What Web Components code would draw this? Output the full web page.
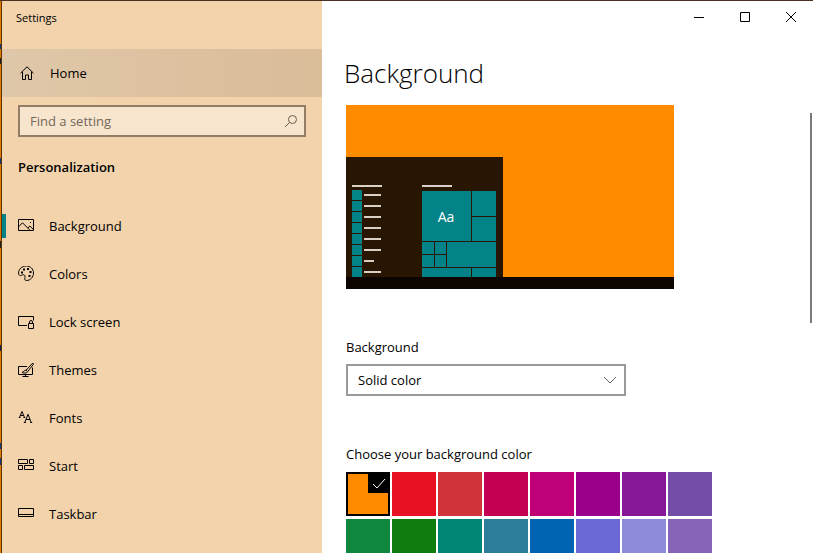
<!DOCTYPE html>
<html lang="en">
<head>
<meta charset="utf-8">
<meta name="viewport" content="width=device-width, initial-scale=1">
<title>Settings</title>
<style>
  body {
    margin: 0;
    font: 13px/20px "Open Sans", "Noto Sans", sans-serif;
    color: #000;
    background: #fff;
  }
</style>
</head>
<body>
<settings-window>
  <settings-sidebar slot="sidebar" heading="Personalization">
    <nav-item icon="background" active>Background</nav-item>
    <nav-item icon="colors">Colors</nav-item>
    <nav-item icon="lock">Lock screen</nav-item>
    <nav-item icon="themes">Themes</nav-item>
    <nav-item icon="fonts">Fonts</nav-item>
    <nav-item icon="start">Start</nav-item>
    <nav-item icon="taskbar">Taskbar</nav-item>
  </settings-sidebar>
  <window-controls></window-controls>
  <background-page></background-page>
</settings-window>

<script>
const ICONS = {
  home: `<path d="M1.500 8.200 8 1.800l6.500 6.400M3.500 6.800v7.700h3v-4.500h3v4.500h3V6.800"/>`,
  search: `<circle cx="9.500" cy="6.500" r="4"/><path d="M6.600 9.400 2 14"/>`,
  background: `<path d="M.5 1.500h15v11H.5zM.5 8.800l4-4 7.700 7.700M9.800 10l2-2 3.700 3.600"/><path d="M12 4h1v1h-1z" fill="currentColor" stroke="none"/>`,
  colors: `<path transform="translate(0 -1)" d="M8.300 1C12.500 1 15.500 4 15.500 8s-3 7.500-7 7.500c-1.400 0-1.900-.8-1.700-1.800.3-1.500.5-2.800-.4-3.600-.8-.7-1.700-.4-2.800.2C2.200 11 .5 10.300.5 8.200.5 4.200 4 1 8.300 1z"/><path d="M3 5.500h2v2H3zM5 2.500h2v2H5zM9 2h2v2H9zM11.500 5h2v2h-2zM10.500 9h2v2h-2z" fill="currentColor" stroke="none"/>`,
  lock: `<path d="M9 11.500H.5v-9h15v4M10.500 9.500h5v5h-5zM11.500 9.500V8a1.500 1.500 0 0 1 3 0v1.500"/>`,
  themes: `<path d="M9 4.500H.5v8h14v-7M7.500 12.500v2M4.500 14.500h6M14.800 1 8 8.200l1.600 1.500L15.500 2.200zM8 8.200c-2-.3-1.800 1.800-4 2.200 2 1.200 5 .8 5.600-.7"/>`,
  fonts: `<path d="M1.500 7.500 4 1.500l2.500 6M2.300 5.500h3.400M.8 7.500h1.700M5.500 7.500h1.700M6.800 12.500 10 4.300l3.200 8.200M8 9.500h4M5.800 12.500h2M12.200 12.500h2"/>`,
  start: `<path d="M.5 1.500h9v4h-9zM11.500 1.500h4v4h-4zM.5 7.500h4v4h-4zM6.500 7.500h9v4h-9z"/>`,
  taskbar: `<path d="M.5 2.500h15v8H.5zM.5 8.500h15"/>`,
  minimize: `<path d="M3 8.500h10"/>`,
  maximize: `<path d="M3.500 3.500h9v9h-9z"/>`,
  close: `<path d="m3 3 10 10M13 3 3 13"/>`,
  chevron: `<path d="m2 5 6 6 6-6"/>`,
  check: `<path d="m2 9 4 4 8-9"/>`
};

const define = (name, Base) => customElements.define(name, Base);

class BaseElement extends HTMLElement {
  constructor() {
    super();
    this.attachShadow({ mode: "open" });
  }
  connectedCallback() {
    this.shadowRoot.innerHTML = this.template;
  }
}

define("ui-icon", class UiIcon extends BaseElement {
  get template() {
    return `<style>
      :host { display: block; flex: none; width: 16px; height: 16px; }
      svg { display: block; width: 100%; height: 100%; }
    </style>
    <svg viewBox="0 0 16 16" fill="none" stroke="currentColor" aria-hidden="true">${ICONS[this.getAttribute("name")]}</svg>`;
  }
});

define("settings-window", class SettingsWindow extends BaseElement {
  get template() {
    return `<style>
      :host {
        display: grid;
        grid-template-columns: 320px minmax(0, 1fr);
        box-sizing: border-box;
        height: 100vh;
        padding: 1px 0 0 2px;
        overflow: hidden;
        /* strip of desktop that shows round the window */
        background:
          linear-gradient(#4a3020, #4a3020) 0 0 / calc(100% - 6px) 1px no-repeat,
          linear-gradient(#5c3205, #5c3205) 1px 0 / 1px 100% no-repeat,
          linear-gradient(#e07b00 44px, #123a80 44px 49px, #e07b00 49px 58px, #222 58px 64px,
            #e07b00 64px 158px, #123a80 158px 164px, #e07b00 164px 241px, #222 241px 248px,
            #e07b00 248px 345px, #14224a 345px 351px, #e07b00 351px 443px, #123a80 443px 449px,
            #e07b00 449px 458px, #123a80 458px 465px, #e07b00 465px) 0 0 / 1px 100% no-repeat,
          #fff;
      }
      main { position: relative; min-width: 0; overflow: hidden; background: #fff; }
      .scrollbar {
        position: absolute;
        top: 112px;
        right: 7px;
        width: 2px;
        height: 38%;
        background: #7a7a7a;
      }
    </style>
    <slot name="sidebar"></slot>
    <main><slot></slot><div class="scrollbar"></div></main>`;
  }
});

define("settings-sidebar", class SettingsSidebar extends BaseElement {
  get template() {
    return `<style>
      :host { display: block; background: #f2d3ac; }
      header { padding: 7px 14px 21px; font-size: 11px; }
      .home {
        display: flex;
        align-items: center;
        gap: 15px;
        height: 48px;
        padding: 0 17px;
        color: inherit;
        text-decoration: none;
        background: linear-gradient(90deg, #dfc7a9, #dabd99);
      }
      .search {
        display: flex;
        align-items: center;
        box-sizing: border-box;
        height: 32px;
        margin: 8px 16px 20px;
        padding: 0 5px 0 10px;
        border: 2px solid #937d66;
        background: #f7e5ce;
        color: #6b5d4e;
      }
      input {
        flex: 1;
        min-width: 0;
        padding: 0;
        border: 0;
        outline: 0;
        background: none;
        font: inherit;
        color: #000;
      }
      input::placeholder { color: #73685b; opacity: 1; }
      h2 { margin: 0 16px 25px; font-size: 13px; line-height: 20px; font-weight: 600; }
    </style>
    <header>Settings</header>
    <a class="home" href="#home"><ui-icon name="home"></ui-icon>Home</a>
    <label class="search">
      <input type="text" placeholder="Find a setting" aria-label="Find a setting">
      <ui-icon name="search"></ui-icon>
    </label>
    <h2>${this.getAttribute("heading")}</h2>
    <nav><slot></slot></nav>`;
  }
});

define("nav-item", class NavItem extends BaseElement {
  get template() {
    return `<style>
      :host { display: block; }
      a {
        display: flex;
        align-items: center;
        gap: 15px;
        height: 48px;
        padding-right: 16px;
        color: inherit;
        text-decoration: none;
      }
      a::before { content: ""; width: 4px; height: 24px; margin-right: -3px; }
      :host([active]) a::before { background: #038387; }
    </style>
    <a href="#${this.getAttribute("icon")}"><ui-icon name="${this.getAttribute("icon")}"></ui-icon><slot></slot></a>`;
  }
});

define("window-controls", class WindowControls extends BaseElement {
  get template() {
    return `<style>
      :host { display: flex; justify-content: flex-end; padding-right: 5px; }
      button {
        display: grid;
        place-items: center;
        width: 46px;
        height: 32px;
        padding: 0;
        border: 0;
        background: none;
        color: #000;
      }
    </style>
    <button aria-label="Minimize"><ui-icon name="minimize"></ui-icon></button>
    <button aria-label="Maximize"><ui-icon name="maximize"></ui-icon></button>
    <button aria-label="Close"><ui-icon name="close"></ui-icon></button>`;
  }
});

define("desktop-preview", class DesktopPreview extends BaseElement {
  get template() {
    const rows = [...Array(8).keys()].map(i => `
      <path fill="#038387" d="M6 ${85 + i * 11}h10v10H6z"/>
      <path fill="#d9cfc5" d="M18 ${89 + i * 11}h${i === 6 ? 10 : 17}v2H18z"/>`).join("");
    return `<style>
      :host { display: block; width: 328px; max-width: 100%; }
      svg { display: block; width: 100%; }
      text { font: 14px "Open Sans", "Noto Sans", sans-serif; }
    </style>
    <svg viewBox="0 0 328 184" shape-rendering="crispEdges">
      <path fill="#ff8c00" d="M0 0h328v184H0z"/>
      <path fill="#281502" d="M0 52h157v120H0z"/>
      <path fill="#d9cfc5" d="M6 80h30v2H6zM76 80h30v2H76z"/>
      ${rows}
      <g fill="#038387">
        <path d="M76 86h49v50H76zM126 86h24v25h-24zM126 112h24v24h-24z"/>
        <path d="M76 137h12v12H76zM89 137h11v12H89zM76 150h12v12H76zM89 150h11v12H89zM101 137h49v25h-49z"/>
        <path d="M76 163h49v9H76zM126 163h24v9h-24z"/>
      </g>
      <path fill="#0d0500" d="M0 172h328v12H0z"/>
      <text x="100" y="117" text-anchor="middle" fill="#fff">Aa</text>
    </svg>`;
  }
});

define("drop-down", class DropDown extends BaseElement {
  get template() {
    return `<style>
      :host { display: block; }
      label { display: block; margin-bottom: 7px; }
      .field { display: grid; align-items: center; width: 280px; max-width: 100%; }
      .field > * { grid-area: 1 / 1; }
      select {
        appearance: none;
        box-sizing: border-box;
        width: 100%;
        height: 32px;
        padding: 0 30px 0 10px;
        border: 2px solid #999;
        border-radius: 0;
        background: #fff;
        font: inherit;
        color: #000;
      }
      ui-icon { justify-self: end; margin-right: 8px; color: #666; pointer-events: none; }
    </style>
    <label for="field">${this.getAttribute("label")}</label>
    <div class="field">
      <select id="field">
        ${this.getAttribute("options").split(",").map(o => `<option>${o}</option>`).join("")}
      </select>
      <ui-icon name="chevron"></ui-icon>
    </div>`;
  }
});

define("color-swatches", class ColorSwatches extends BaseElement {
  get template() {
    const swatches = this.getAttribute("colors").split(" ").map((c, i) => `
      <label style="background: ${c}">
        <input type="radio" name="color" aria-label="${c}" ${i ? "" : "checked"}>
        <span><ui-icon name="check"></ui-icon></span>
      </label>`).join("");
    return `<style>
      :host { display: block; }
      fieldset { margin: 0; padding: 0; border: 0; min-width: 0; }
      legend { padding: 0; margin-bottom: 8px; }
      .grid { display: grid; grid-template-columns: repeat(8, 44px); gap: 3px 2px; }
      label { position: relative; display: block; height: 44px; }
      input { appearance: none; display: block; box-sizing: border-box; width: 100%; height: 100%; margin: 0; }
      input:checked { border: 2px solid #000; }
      span { display: none; }
      input:checked + span {
        position: absolute;
        top: 0;
        right: 0;
        display: grid;
        place-items: center;
        width: 22px;
        height: 21px;
        color: #fff;
        background: #000;
      }
    </style>
    <fieldset>
      <legend>${this.getAttribute("label")}</legend>
      <div class="grid">${swatches}</div>
    </fieldset>`;
  }
});

define("background-page", class BackgroundPage extends BaseElement {
  get template() {
    return `<style>
      :host { display: block; padding: 22px 24px; }
      h1 { margin: 0 0 14px -2px; font-size: 26px; line-height: 36px; font-weight: 300; }
      drop-down { margin: 48px 0; }
    </style>
    <h1>Background</h1>
    <desktop-preview></desktop-preview>
    <drop-down label="Background" options="Solid color,Picture,Slideshow"></drop-down>
    <color-swatches label="Choose your background color"
      colors="#ff8c00 #e81123 #d13438 #c30052 #bf0077 #9a0089 #881798 #744da9 #10893e #107c10 #018574 #2d7d9a #0063b1 #6b69d6 #8e8cd8 #8764b8"></color-swatches>`;
  }
});
</script>
</body>
</html>
